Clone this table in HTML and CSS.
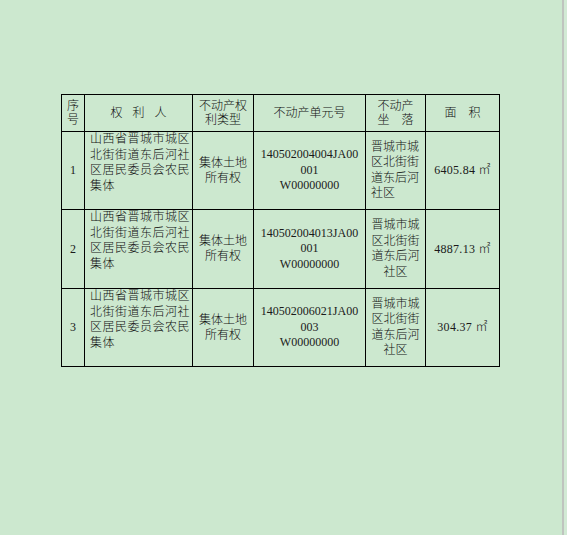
FILE: index.html
```html
<!DOCTYPE html>
<html lang="zh-CN">
<head>
<meta charset="utf-8">
<title>不动产权利表</title>
<link rel="stylesheet" href="styles.css">
</head>
<body>
<div class="page">
  <div class="doc">
    <table class="grid">
      <colgroup>
        <col class="c-no">
        <col class="c-owner">
        <col class="c-type">
        <col class="c-unit">
        <col class="c-loc">
        <col class="c-area">
      </colgroup>
      <thead>
        <tr class="head">
          <th>序<br>号</th>
          <th><span class="spread">权利人</span></th>
          <th>不动产权<br>利类型</th>
          <th>不动产单元号</th>
          <th>不动产<br>坐　落</th>
          <th>面　积</th>
        </tr>
      </thead>
      <tbody>
        <tr class="row r1">
          <td class="no">1</td>
          <td class="owner">山西省晋城市城区<br>北街街道东后河社<br>区居民委员会农民<br>集体</td>
          <td class="type">集体土地<br>所有权</td>
          <td class="unit">140502004004JA00<br>001<br>W00000000</td>
          <td class="loc left">晋城市城<br>区北街街<br>道东后河<br>社区</td>
          <td class="area">6405.84 <span class="unit-sym">㎡</span></td>
        </tr>
        <tr class="row r2">
          <td class="no">2</td>
          <td class="owner">山西省晋城市城区<br>北街街道东后河社<br>区居民委员会农民<br>集体</td>
          <td class="type">集体土地<br>所有权</td>
          <td class="unit">140502004013JA00<br>001<br>W00000000</td>
          <td class="loc">晋城市城<br>区北街街<br>道东后河<br>社区</td>
          <td class="area">4887.13 <span class="unit-sym">㎡</span></td>
        </tr>
        <tr class="row r3">
          <td class="no">3</td>
          <td class="owner">山西省晋城市城区<br>北街街道东后河社<br>区居民委员会农民<br>集体</td>
          <td class="type">集体土地<br>所有权</td>
          <td class="unit">140502006021JA00<br>003<br>W00000000</td>
          <td class="loc">晋城市城<br>区北街街<br>道东后河<br>社区</td>
          <td class="area">304.37 <span class="unit-sym">㎡</span></td>
        </tr>
      </tbody>
    </table>
  </div>
  <div class="edge"></div>
</div>
</body>
</html>
```

FILE: styles.css
```css
html, body {
  margin: 0;
  padding: 0;
  height: 100%;
}

body {
  background: #cce8cf;
  font-family: "Liberation Serif", "Noto Sans CJK SC", serif;
  font-size: 12px;
  font-weight: 300;
  color: #111;
}

.page {
  display: flex;
  min-height: 535px;
}

.doc {
  width: 562px;
  padding: 94px 0 0 61px;
  box-sizing: border-box;
}

.edge {
  flex: 1;
  border-left: 2px solid #bfc4bf;
  background: #d2ead5;
}

.grid {
  border-collapse: collapse;
  table-layout: fixed;
  width: 438px;
}

.c-no { width: 23px; }
.c-owner { width: 108px; }
.c-type { width: 61px; }
.c-unit { width: 112px; }
.c-loc { width: 60px; }
.c-area { width: 74px; }

.grid th,
.grid td {
  border: 1px solid #000;
  padding: 0;
  text-align: center;
  vertical-align: middle;
  font-weight: 300;
  line-height: 15px;
}

.head {
  height: 37px;
}

.head th {
  line-height: 14.5px;
}

.spread {
  letter-spacing: 10px;
  margin-right: -10px;
}

.r1 { height: 78px; }
.r2 { height: 79px; }
.r3 { height: 78px; }

.grid td.no,
.grid td.unit,
.grid td.area {
  font-weight: 400;
  color: #1a1a1a;
}

.grid td.owner {
  text-align: left;
  vertical-align: top;
  padding: 0 0 0 5px;
  letter-spacing: 0.5px;
  line-height: 15.5px;
}

.grid td.unit {
  line-height: 15.5px;
}

.grid td.loc {
  padding: 0 3px;
  line-height: 15.5px;
}

.grid td.loc.left {
  text-align: left;
  padding-left: 5px;
}

.grid td.area {
  letter-spacing: 0.3px;
}

.unit-sym {
  font-weight: 300;
}
```
